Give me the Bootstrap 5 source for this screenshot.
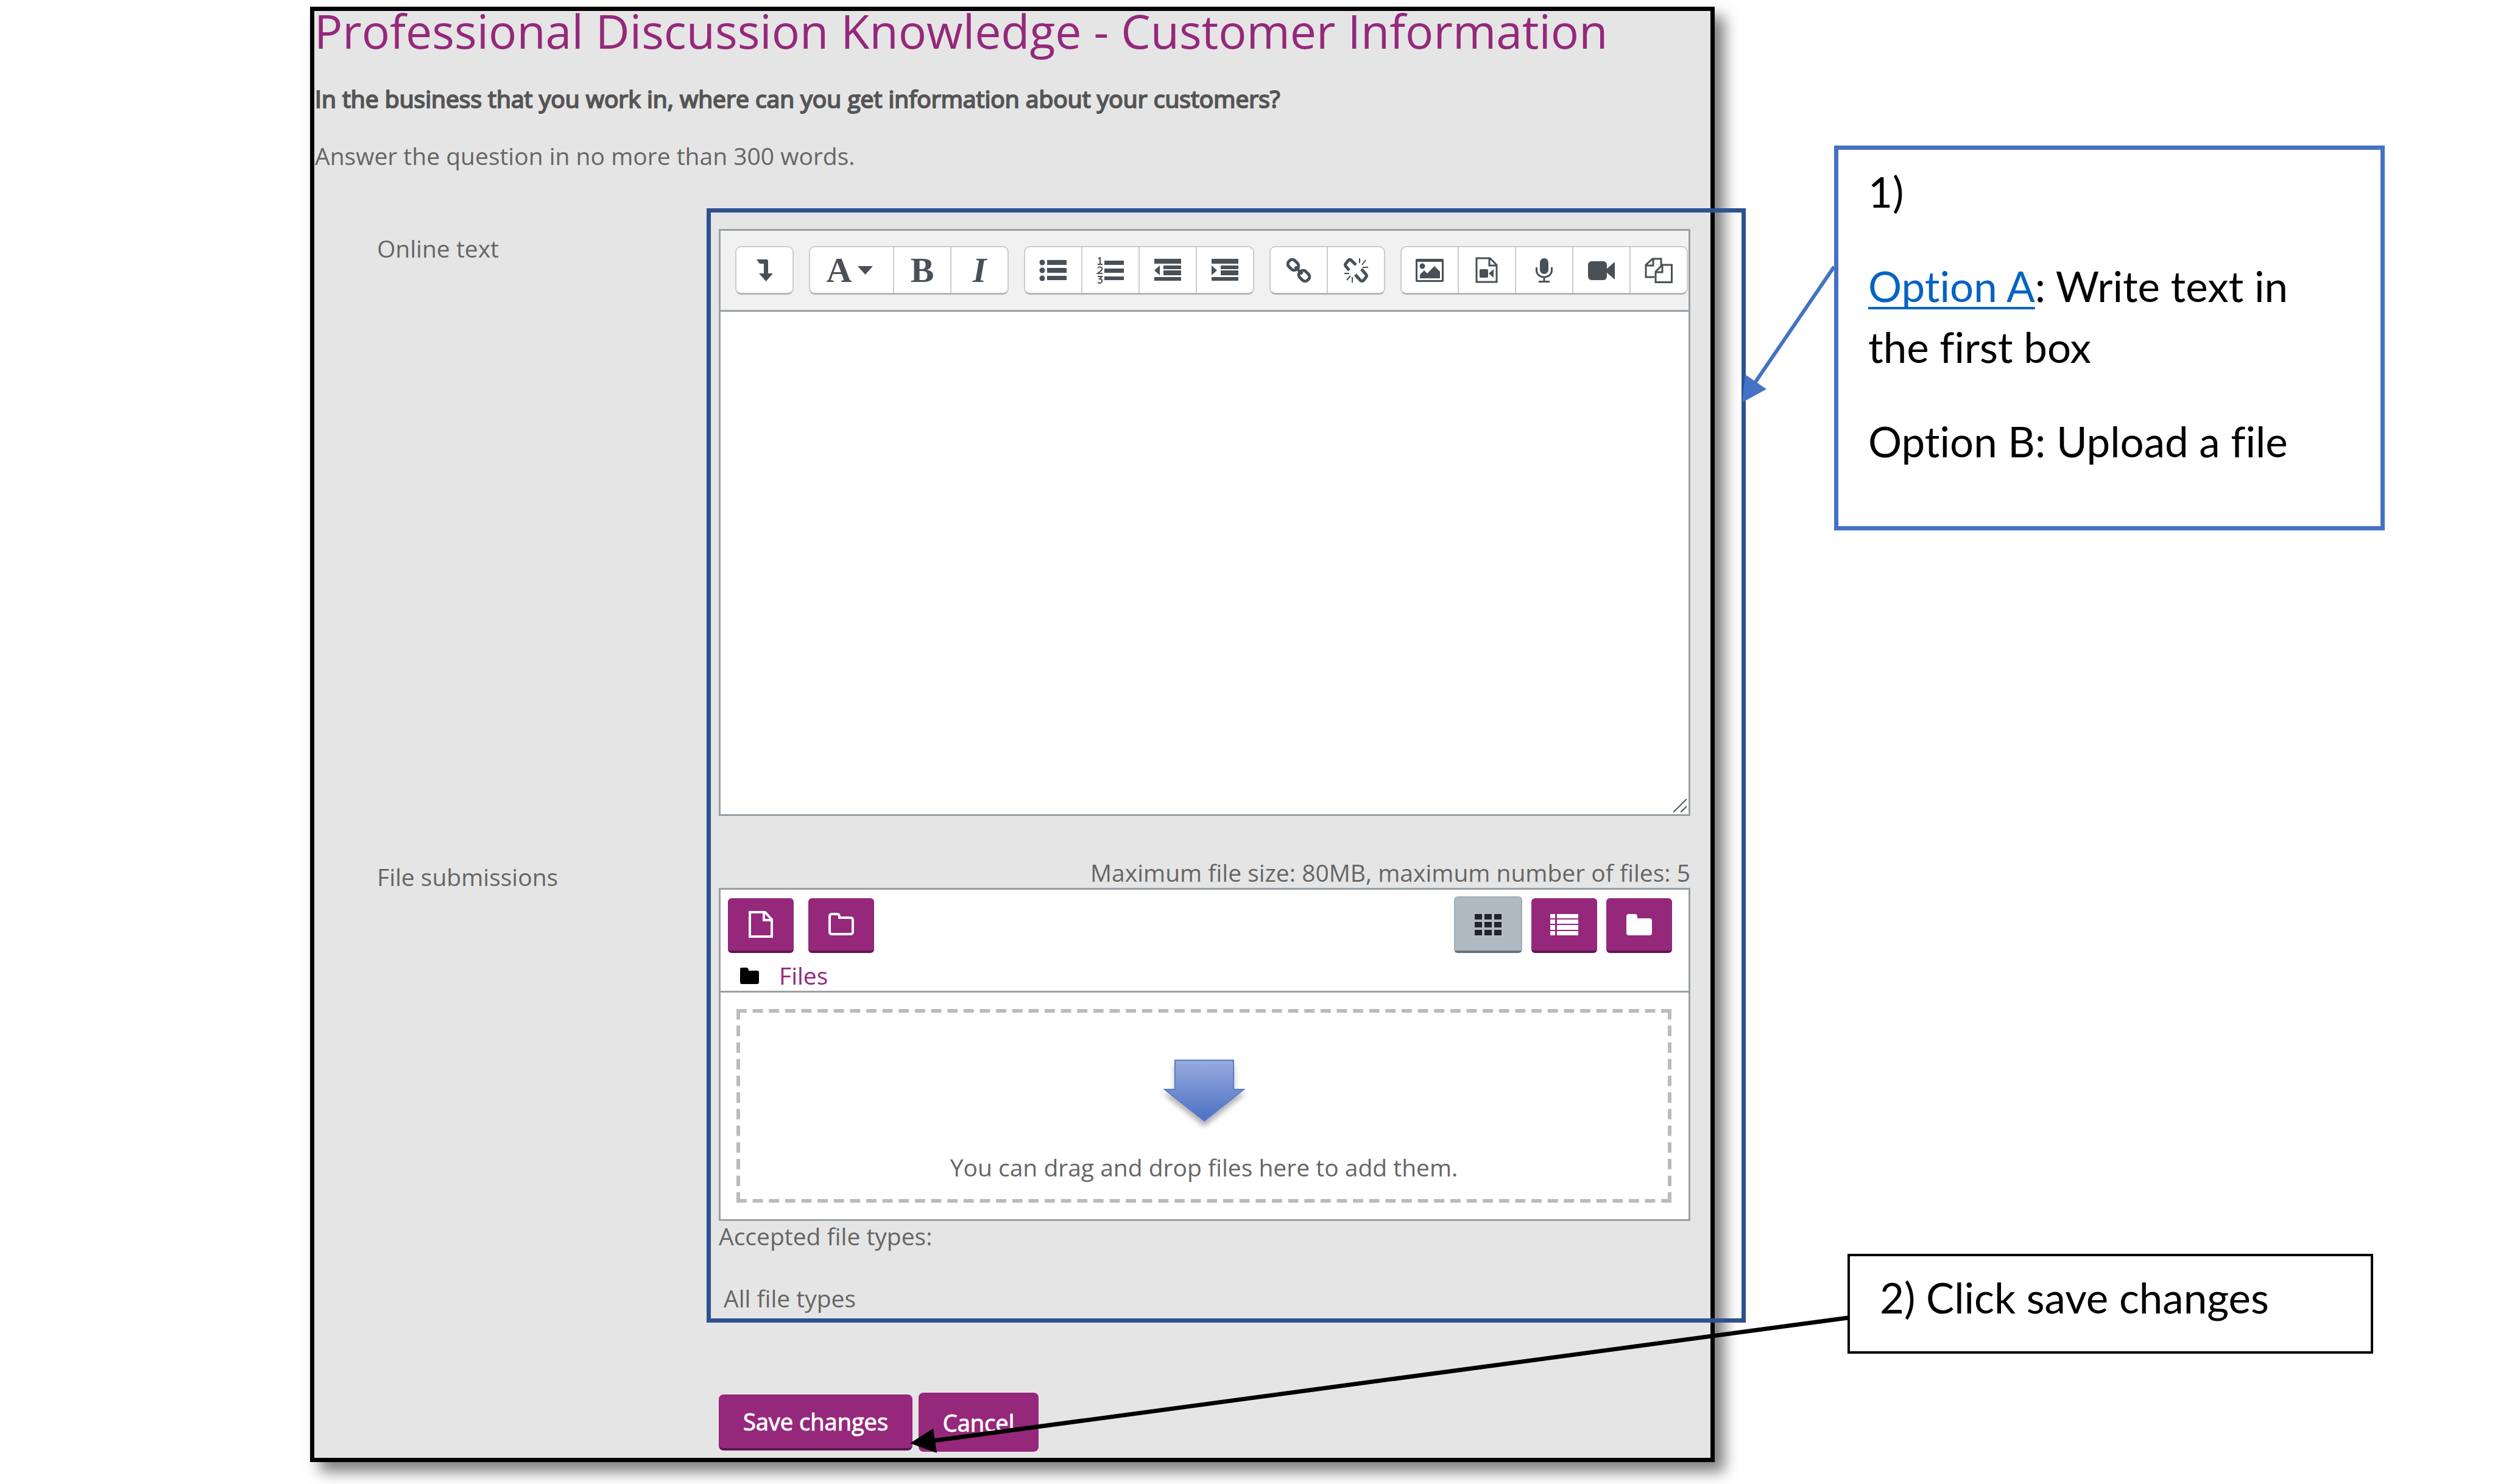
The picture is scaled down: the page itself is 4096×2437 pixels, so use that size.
<!DOCTYPE html>
<html lang="en">
<head>
<meta charset="utf-8">
<meta name="viewport" content="width=device-width, initial-scale=1">
<title>Professional Discussion Knowledge - Customer Information</title>
<link rel="stylesheet" href="https://cdn.jsdelivr.net/npm/bootstrap@5.3.0/dist/css/bootstrap.min.css">
<style>
  :root { --plum: #95287b; --line: #98a0a6; --ink: #495057; }
  body { font: 39px/50px "Open Sans", sans-serif; color: #666; background: #fff; overflow-x: hidden; }
  .sheet { display: grid; grid-template-columns: minmax(0,509fr) minmax(0,2306fr) minmax(0,196fr) minmax(0,904fr) minmax(0,181fr); align-items: start; padding: 11px 0 36px; }
  .shot { grid-column: 2; background: #e5e5e5; border: 7px solid #000; box-shadow: 16px 16px 22px rgba(0,0,0,.5); padding-bottom: 10px; }
  .notes { grid-column: 4; padding-top: 228px; font: 69px/100px Lato, sans-serif; font-variant-ligatures: none; color: #000; }
  .shot h1 { font-size: 77px; line-height: 66px; font-weight: 400; color: var(--plum); margin: 0 0 53px; }
  .question { margin: 0 0 44px 1px; color: #555; -webkit-text-stroke: 2px #555; }
  .limit { margin: 0 0 95px 1px; }
  .task-grid { display: grid; grid-template-columns: minmax(0,664fr) minmax(0,1595fr) minmax(0,33fr); row-gap: 68px; padding-bottom: 15px; }
  .task-grid > label, .task-grid > .side-label { padding: 7px 0 0 103px; grid-column: 1; }
  .field { grid-column: 2; }
  .outline-box { position: absolute; left: 28.1%; right: -58px; top: -34px; bottom: 0; border: 7px solid #2f528f; pointer-events: none; }
  .editor { border: 3px solid var(--line); background: #fff; }
  .editor-bar { background: #f1f1f1; border-bottom: 3px solid var(--line); padding: 25px 0 25px 24px; gap: 25px; }
  .tool-group { background: #fff; border: 2px solid #ccc; border-bottom: 3px solid #b5b5b5; border-radius: 10px; height: 80px; flex: none; }
  .tool-group button { width: 94px; padding: 0; border: 0; border-left: 2px solid #ccc; background: none; color: var(--ink); display: flex; align-items: center; justify-content: center; gap: 10px; }
  .tool-group button:first-child { width: 92px; border-left: 0; }
  .tool-group button.wide:first-child { width: 136px; padding-right: 6px; }
  .glyph { font: bold 58px/58px "Liberation Serif", serif; }
  .tool-group svg { width: 48px; height: 44px; fill: currentColor; }
  .tool-group svg.tiny { width: 25px; height: 14px; }
  .ln { fill: none; stroke: currentColor; stroke-width: 4; }
  .typing { display: block; width: 100%; height: 825px; border: 0; padding: 20px; resize: none; background: #fff; }
  .grip { position: absolute; right: 3px; bottom: 3px; width: 22px; height: 22px; stroke: #555; stroke-width: 2; fill: none; }
  .manager { border: 3px solid var(--line); background: #fff; }
  .manager-top { border-bottom: 3px solid var(--line); padding: 11px 27px 0 12px; }
  .btn-plum { background: var(--plum); color: #fff; border: 0; border-radius: 6px; border-bottom: 4px solid #5f174e; padding: 0; width: 108px; height: 90px; display: flex; align-items: center; justify-content: center; }
  .btn-plum:hover { background: var(--plum); color: #fff; }
  .btn-plum svg { width: 48px; height: 46px; fill: currentColor; }
  .btn-plum.chosen { background: #afbac3; color: #212529; border: 2px solid #a3afb8; border-bottom: 4px solid #66737c; width: 112px; height: 93px; }
  .add-tools { gap: 24px; }
  .view-tools { gap: 15px; }
  .path-row { margin-top: 12px; padding-left: 20px; gap: 33px; height: 50px; }
  .path-row svg { width: 31px; height: 27px; }
  .path-row a { color: var(--plum); text-decoration: none; }
  .drop-pad { padding: 27px 28px 27px 26px; }
  .drop-zone { height: 318px; padding-top: 83px; text-align: center; }
  .drop-zone svg.dashes { position: absolute; inset: 0; width: 100%; height: 100%; stroke: #bbb; stroke-width: 6; }
  .drop-zone .down { display: block; width: 160px; height: 122px; margin: 0 auto 30px; }
  .file-types { margin-top: 52px; padding-left: 8px; }
  .actions { margin-top: 115px; gap: 10px; padding-left: 28.97%; }
  .actions .btn { background: var(--plum); color: #fff; font-size: 38px; line-height: 50px; border: 0; border-radius: 8px; -webkit-text-stroke: 1px #fff; }
  .actions .save { width: 318px; height: 92px; border-bottom: 4px solid #5f174e; }
  .actions .cancel { width: 197px; height: 97px; }
  .note-one { border: 7px solid #4472c4; background: #fff; padding: 19px 48px 89px 49px; }
  .note-one p { margin: 0 0 55px; }
  .note-one p:last-child { margin: 0; }
  .note-one a { color: #0563c1; text-decoration-thickness: 4px; text-underline-offset: 8px; text-decoration-skip-ink: none; }
  .note-two { border: 4px solid #000; background: #fff; margin: 1188px 19px 0 22px; padding: 18px 49px 38px; white-space: nowrap; }
  .arrows { position: absolute; left: 0; top: 0; width: 100%; pointer-events: none; }
</style>
<script src="https://cdn.jsdelivr.net/npm/bootstrap@5.3.0/dist/js/bootstrap.bundle.min.js"></script>
</head>
<body>
<div class="sheet position-relative">
  <main class="shot">
    <h1>Professional Discussion Knowledge - Customer Information</h1>
    <p class="question">In the business that you work in, where can you get information about your customers?</p>
    <p class="limit">Answer the question in no more than 300 words.</p>

    <form onsubmit="return false">
      <div class="task-grid position-relative">
        <label for="online-text">Online text</label>
        <div class="field editor position-relative">
          <div class="editor-bar d-flex">
            <div class="tool-group d-flex">
              <button type="button" aria-label="Show more buttons"><svg viewBox="0 0 48 44"><path d="M11 4h16q3 0 3 3v20h8L26.500 40 15 27h8V11h-7z"/></svg></button>
            </div>
            <div class="tool-group d-flex">
              <button type="button" class="wide" aria-label="Paragraph styles"><span class="glyph">A</span><svg class="tiny" viewBox="0 0 25 14"><path d="M0 0h25L12.500 14z"/></svg></button>
              <button type="button" aria-label="Bold"><span class="glyph">B</span></button>
              <button type="button" aria-label="Italic"><span class="glyph fst-italic">I</span></button>
            </div>
            <div class="tool-group d-flex">
              <button type="button" aria-label="Unordered list"><svg viewBox="0 0 48 44"><circle cx="6" cy="9" r="4.500"/><circle cx="6" cy="22" r="4.500"/><circle cx="6" cy="35" r="4.500"/><path d="M14 5h32v8H14zM14 18h32v8H14zM14 31h32v7H14z"/></svg></button>
              <button type="button" aria-label="Ordered list"><svg viewBox="0 0 48 44"><g class="ln" style="stroke-width:2"><path d="M4 3l3-2v11M3 12h8M3 18q3-3 6-1t-1 6l-5 4h8M3 32h7l-4 4q5 0 4 4t-7 2"/></g><path d="M14 6h32v7H14zM14 19h32v7H14zM14 32h32v6H14z"/></svg></button>
              <button type="button" aria-label="Outdent"><svg viewBox="0 0 48 44"><path d="M2 3h44v8H2zM17 14h29v6H17zM17 22h29v8H17zM2 33h44v6H2zM11 14v16L2 22z"/></svg></button>
              <button type="button" aria-label="Indent"><svg viewBox="0 0 48 44"><path d="M2 3h44v8H2zM17 14h29v6H17zM17 22h29v8H17zM2 33h44v6H2zM2 14v16l9-8z"/></svg></button>
            </div>
            <div class="tool-group d-flex">
              <button type="button" aria-label="Link"><svg viewBox="0 0 48 44"><g class="ln" style="stroke-width:5"><rect x="6" y="6" width="18" height="14" rx="6" transform="rotate(45 15 13)"/><rect x="24" y="24" width="18" height="14" rx="6" transform="rotate(45 33 31)"/><path d="M18 16l12 12"/></g></svg></button>
              <button type="button" aria-label="Unlink"><svg viewBox="0 0 48 44"><g class="ln" style="stroke-width:5"><path d="M13 22l-5-6q-3-3 0-6l3-4q3-3 6 0l7 7M33 20l7 8q3 3 0 6l-3 4q-3 3-6 0l-8-9"/></g><g class="ln" style="stroke-width:2"><path d="M30 2v8M40 5l-6 8M35 17h9M18 33v9M9 38l6-7M5 27h8"/></g></svg></button>
            </div>
            <div class="tool-group d-flex">
              <button type="button" aria-label="Insert image"><svg viewBox="0 0 48 44"><path fill-rule="evenodd" d="M3 3h42q2 0 2 2v34q0 2-2 2H3q-2 0-2-2V5q0-2 2-2zm1 5v30h40V8z"/><circle cx="12" cy="15" r="4.500"/><path d="M8 35v-6l7-7 5 5 12-12 9 9v11z"/></svg></button>
              <button type="button" aria-label="Insert media"><svg viewBox="0 0 48 44"><path class="ln" style="stroke-width:3" d="M7 2h22l11 11v28H7zM28 2v12h12"/><rect x="12" y="20" width="14" height="14" rx="2"/><path d="M27 27l8-7v14z"/></svg></button>
              <button type="button" aria-label="Record audio"><svg viewBox="0 0 48 44"><rect x="17" y="2" width="14" height="26" rx="7"/><path class="ln" style="stroke-width:3" d="M11.500 17v5a12.500 11 0 0 0 25 0v-5M24 33v7M15 40.500h18"/></svg></button>
              <button type="button" aria-label="Record video"><svg viewBox="0 0 48 44"><rect x="2" y="7" width="31" height="31" rx="6"/><path d="M32 20L46 8v29L32 25z"/></svg></button>
              <button type="button" aria-label="Manage files"><svg viewBox="0 0 48 44"><g class="ln" style="stroke-width:3"><path d="M17 33H3V13L14 3h14v11M15 3v11H3M45.500 13H30L19 24v17.500h26.500zM30 13v12H19"/></g></svg></button>
            </div>
          </div>
          <textarea class="typing" id="online-text"></textarea>
          <svg class="grip" viewBox="0 0 22 22" aria-hidden="true"><path d="M0 22L22 0M12 22l10-10"/></svg>
        </div>

        <span class="side-label">File submissions</span>
        <div class="field">
          <div class="text-end">Maximum file size: 80MB, maximum number of files: 5</div>
          <div class="manager">
            <div class="manager-top">
              <div class="d-flex justify-content-between align-items-end">
                <div class="add-tools d-flex">
                  <button type="button" class="btn btn-plum" aria-label="Add file"><svg viewBox="0 0 48 46"><path class="ln" d="M6 3h25l11 12v28H6zM29 3v13h13"/></svg></button>
                  <button type="button" class="btn btn-plum" aria-label="Create folder"><svg viewBox="0 0 48 46"><path class="ln" d="M5 10q0-4 4-4h8q4 0 4 4v2h18q4 0 4 4v19q0 4-4 4H9q-4 0-4-4z"/></svg></button>
                </div>
                <div class="view-tools d-flex align-items-end">
                  <button type="button" class="btn btn-plum chosen" aria-label="Icons"><svg viewBox="0 0 48 46"><path d="M2 6h12v9H2zM18 6h12v9H18zM34 6h12v9H34zM2 19h12v9H2zM18 19h12v9H18zM34 19h12v9H34zM2 32h12v9H2zM18 32h12v9H18zM34 32h12v9H34z"/></svg></button>
                  <button type="button" class="btn btn-plum" aria-label="List"><svg viewBox="0 0 48 46"><path d="M1 6h8v7H1zM12 6h35v7H12zM1 15h8v7H1zM12 15h35v7H12zM1 24h8v8H1zM12 24h35v8H12zM1 34h8v7H1zM12 34h35v7H12z"/></svg></button>
                  <button type="button" class="btn btn-plum" aria-label="Tree"><svg viewBox="0 0 48 46"><path d="M3 10q0-4 4-4h10q4 0 4 4v3h20q4 0 4 4v20q0 4-4 4H7q-4 0-4-4z"/></svg></button>
                </div>
              </div>
              <div class="path-row d-flex align-items-center">
                <svg viewBox="0 0 31 27" aria-hidden="true"><path d="M0 3q0-3 3-3h7q4 0 4 5h14q3 0 3 3v16q0 3-3 3H3q-3 0-3-3z"/></svg>
                <a href="#files">Files</a>
              </div>
            </div>
            <div class="drop-pad" id="files">
              <div class="drop-zone position-relative">
                <svg class="dashes" aria-hidden="true">
                  <line x1="0" y1="3" x2="100%" y2="3" pathLength="1556" stroke-dasharray="17 10"/>
                  <line x1="0" y1="315" x2="100%" y2="315" pathLength="1556" stroke-dasharray="17 10"/>
                  <line x1="3" y1="0" x2="3" y2="100%" pathLength="314" stroke-dasharray="17 10"/>
                  <line x1="100%" y1="0" x2="100%" y2="100%" pathLength="314" stroke-dasharray="17 10" transform="translate(-3 0)"/>
                </svg>
                <svg class="down" viewBox="0 0 160 122" aria-hidden="true">
                  <defs>
                    <linearGradient id="sky" x1="0" y1="0" x2="0" y2="1"><stop offset="0" stop-color="#97abdd"/><stop offset="1" stop-color="#4c70c6"/></linearGradient>
                    <filter id="soft" x="-20%" y="-20%" width="140%" height="150%"><feDropShadow dx="0" dy="8" stdDeviation="4" flood-color="#000" flood-opacity=".3"/></filter>
                  </defs>
                  <path d="M32 1h96v48h17l-65 52L15 49h17z" fill="url(#sky)" stroke="#5b7cc9" stroke-width="2" filter="url(#soft)"/>
                </svg>
                <div>You can drag and drop files here to add them.</div>
              </div>
            </div>
          </div>
          <div>Accepted file types:</div>
          <div class="file-types">All file types</div>
        </div>
        <div class="outline-box"></div>
      </div>
      <div class="actions d-flex align-items-center">
        <button type="submit" class="btn save p-0">Save changes</button>
        <button type="button" class="btn cancel p-0">Cancel</button>
      </div>
    </form>
  </main>

  <aside class="notes">
    <div class="note-one">
      <p>1)</p>
      <p><a href="#online-text">Option A</a>: Write text in the first box</p>
      <p>Option B: Upload a file</p>
    </div>
    <div class="note-two">2) Click save changes</div>
  </aside>

  <svg class="arrows" viewBox="0 0 4096 2437" aria-hidden="true">
    <path d="M3011 438L2880 630" stroke="#4472c4" stroke-width="6"/>
    <path d="M2860 661l5-46 35 24z" fill="#4472c4"/>
    <path d="M3034 2164L1532 2366" stroke="#000" stroke-width="7"/>
    <path d="M1494 2370l38-24 6 40z"/>
  </svg>
</div>
</body>
</html>
